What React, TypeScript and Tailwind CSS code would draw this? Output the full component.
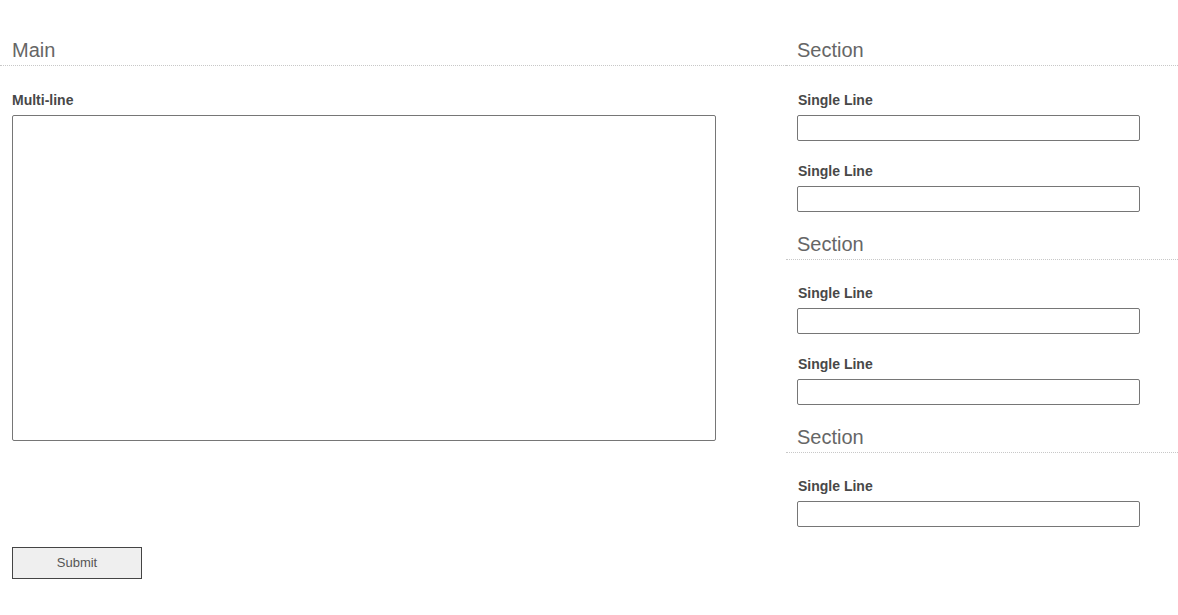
const font = { fontFamily: '"Liberation Sans", Arial, sans-serif' };

function Heading({ title, indent }: { title: string; indent: string }) {
  return (
    <div className={`border-b border-dotted border-[#c8c8c8] pb-[3px] ${indent}`}>
      <h2 className="text-[20px] leading-[24px] font-normal text-[#666]">{title}</h2>
    </div>
  );
}

function Field({ label, gap }: { label: string; gap: string }) {
  return (
    <div className={gap}>
      <label className="block pl-[1px] text-[14px] leading-[16px] font-bold text-[#484848]">
        {label}
      </label>
      <input
        type="text"
        className="mt-[7px] block h-[26px] w-[343px] rounded-[2px] border border-[#767676] bg-white"
      />
    </div>
  );
}

function Section({ fields }: { fields: number }) {
  return (
    <div className="-ml-[11px] pt-[20px]">
      <Heading title="Section" indent="pl-[11px]" />
      <div className="pl-[11px]">
        {Array.from({ length: fields }).map((_, i) => (
          <Field key={i} label="Single Line" gap={i === 0 ? "mt-[25px]" : "mt-[22px]"} />
        ))}
      </div>
    </div>
  );
}

export default function App() {
  return (
    <div className="min-h-screen bg-white pt-[18px]" style={font}>
      <div className="grid grid-cols-[786px_1fr]">
        <div className="pt-[20px]">
          <Heading title="Main" indent="pl-[12px]" />
          <div className="pl-[12px]">
            <label className="mt-[26px] block text-[14px] leading-[16px] font-bold text-[#484848]">
              Multi-line
            </label>
            <textarea className="mt-[7px] block h-[326px] w-[704px] resize-none rounded-[2px] border border-[#767676] bg-white" />
            <button
              type="button"
              className="mt-[106px] h-[32px] w-[130px] border border-[#444] bg-[#efefef] text-[13px] text-[#555]"
            >
              Submit
            </button>
          </div>
        </div>
        <div className="pl-[11px]">
          <div className="-ml-[11px] pt-[20px]">
            <Heading title="Section" indent="pl-[11px]" />
          </div>
          <Field label="Single Line" gap="mt-[26px]" />
          <Field label="Single Line" gap="mt-[22px]" />
          <Section fields={2} />
          <Section fields={1} />
        </div>
      </div>
    </div>
  );
}
